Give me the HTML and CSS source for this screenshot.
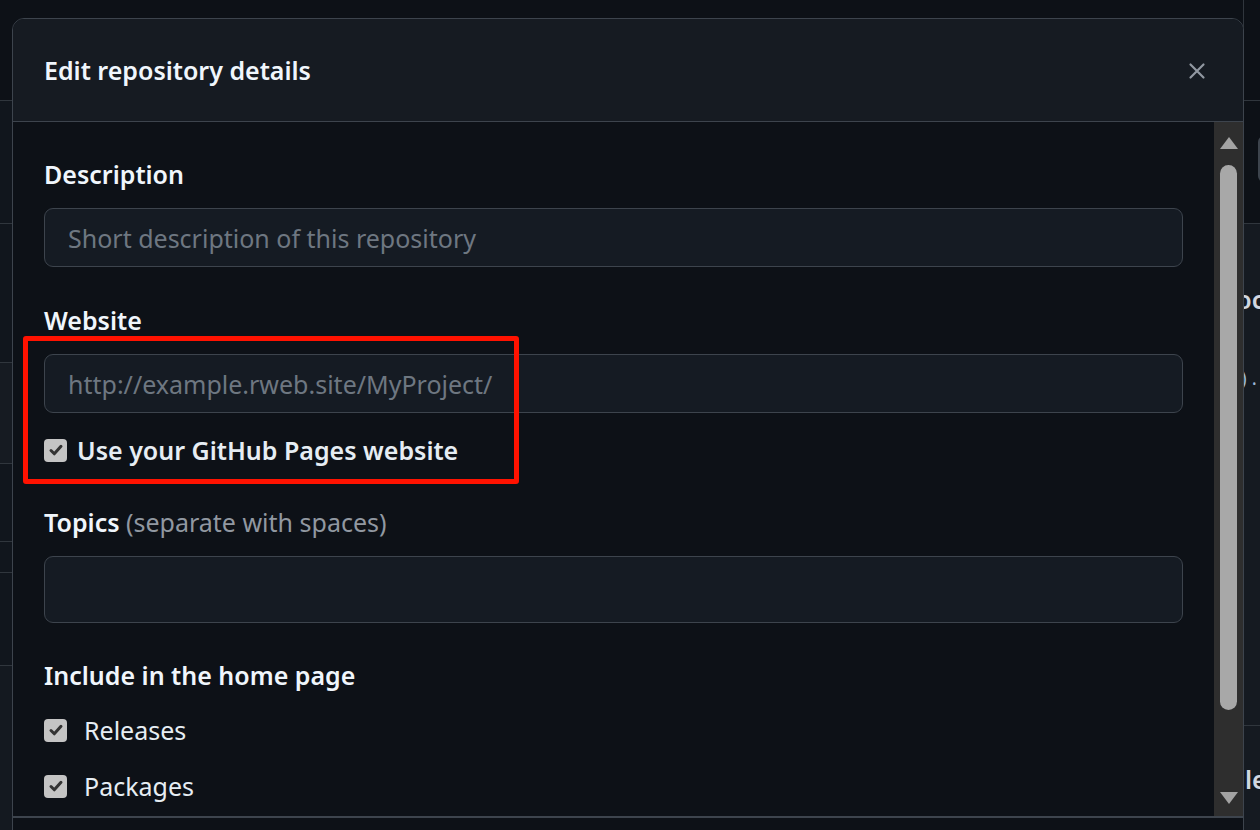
FILE: index.html
```html
<!DOCTYPE html>
<html lang="en">
<head>
<meta charset="utf-8">
<title>Edit repository details</title>
<link rel="stylesheet" href="styles.css">
</head>
<body>
<div class="page">
  <div class="side side-left">
    <div class="seg seg-top"></div>
    <div class="seg seg-a"></div>
    <div class="seg seg-b"></div>
    <div class="seg seg-c"></div>
    <div class="seg seg-d"></div>
    <div class="seg seg-e"></div>
    <div class="seg seg-f"></div>
    <div class="seg seg-g"></div>
  </div>
  <div class="middle"></div>
  <div class="side side-right">
    <div class="seg seg-top"></div>
    <div class="seg r-a"><span class="r-btn"></span></div>
    <div class="seg r-b">
      <div class="r-text r-big">Docs</div>
      <div class="r-text r-small">) .</div>
    </div>
    <div class="seg r-c"><div class="r-text r-big r-last">le</div></div>
  </div>

  <div class="dialog">
    <div class="dialog-header">
      <h1 class="dialog-title">Edit repository details</h1>
      <button class="close-btn" aria-label="Close">
        <svg width="18" height="18" viewBox="0 0 18 18"><path d="M2.5 2.5 L15.5 15.5 M15.5 2.5 L2.5 15.5" stroke="#9198a1" stroke-width="2.2" stroke-linecap="round"/></svg>
      </button>
    </div>
    <div class="dialog-body">
      <div class="form">
        <div class="label first">Description</div>
        <div class="input"><span class="placeholder">Short description of this repository</span></div>

        <div class="label">Website</div>
        <div class="website-group">
          <div class="input"><span class="placeholder">http://example.rweb.site/MyProject/</span></div>
          <div class="check-row strong">
            <span class="checkbox"><svg width="16" height="16" viewBox="0 0 16 16"><path d="M3 8.5 L6.3 11.8 L13 4.3" fill="none" stroke="#333333" stroke-width="3" stroke-linecap="round" stroke-linejoin="round"/></svg></span>
            <span>Use your GitHub Pages website</span>
          </div>
          <div class="highlight"></div>
        </div>

        <div class="label topics">Topics <span class="hint">(separate with spaces)</span></div>
        <div class="input tall"></div>

        <div class="label home">Include in the home page</div>
        <div class="check-row plain">
          <span class="checkbox"><svg width="16" height="16" viewBox="0 0 16 16"><path d="M3 8.5 L6.3 11.8 L13 4.3" fill="none" stroke="#333333" stroke-width="3" stroke-linecap="round" stroke-linejoin="round"/></svg></span>
          <span>Releases</span>
        </div>
        <div class="check-row plain">
          <span class="checkbox"><svg width="16" height="16" viewBox="0 0 16 16"><path d="M3 8.5 L6.3 11.8 L13 4.3" fill="none" stroke="#333333" stroke-width="3" stroke-linecap="round" stroke-linejoin="round"/></svg></span>
          <span>Packages</span>
        </div>
      </div>
      <div class="scrollbar">
        <span class="arrow up"></span>
        <span class="thumb"></span>
        <span class="arrow down"></span>
      </div>
    </div>
    <div class="dialog-footer"></div>
  </div>
</div>
</body>
</html>
```

FILE: styles.css
```css
* { box-sizing: border-box; }
html, body {
  margin: 0;
  padding: 0;
  background: #0d1117;
  width: 1260px;
  height: 830px;
  overflow: hidden;
  font-family: "Noto Sans", "Open Sans", sans-serif;
  color: #e6edf3;
}
.page {
  position: relative;
  display: flex;
  width: 1260px;
  height: 830px;
}
.side { display: flex; flex-direction: column; overflow: hidden; }
.side-left { width: 12px; }
.side-right { width: 17px; border-left: 1px solid #30363d; }
.middle { flex: 1; }
.seg { border-top: 1px solid #30363d; background: #11161d; }
.seg-top { height: 100px; border-top: none; background: #0d1117; }
.seg-a { height: 123px; }
.seg-b { height: 139px; }
.seg-c { height: 101px; background: #161b22; }
.seg-d { height: 78px; }
.seg-e { height: 31px; }
.seg-f { height: 93px; }
.seg-g { flex: 1; background: #141920; }

.r-a { height: 123px; background: #0d1117; padding-top: 35px; }
.r-btn { display: block; margin-left: 14px; width: 10px; height: 46px; border-left: 2px solid #3d444d; border-top: 1px solid #3d444d; border-bottom: 1px solid #3d444d; border-radius: 6px 0 0 6px; }
.r-b { height: 502px; background: #151a21; padding-top: 58px; }
.r-c { flex: 1; background: #151a21; padding-top: 36px; }
.r-text { white-space: nowrap; line-height: 34px; }
.r-big { font-size: 25px; font-weight: 600; margin-left: -26px; color: #d1d7e0; }
.r-small { font-size: 19px; color: #9cb8d8; margin-left: -3px; margin-top: 45px; }
.r-last { margin-left: 1px; }

.dialog {
  position: absolute;
  left: 12px;
  top: 18px;
  width: 1232px;
  height: 840px;
  border: 1px solid #3d444d;
  border-radius: 12px;
  background: #0d1117;
  display: flex;
  flex-direction: column;
  overflow: hidden;
}
.dialog-header {
  height: 103px;
  flex: none;
  background: #161b22;
  border-bottom: 1px solid #3d444d;
  display: flex;
  align-items: center;
  justify-content: space-between;
  padding: 0 36px 0 31px;
}
.dialog-title {
  margin: 0;
  font-size: 25px;
  font-weight: 600;
  color: #f0f6fc;
}
.close-btn {
  background: none;
  border: none;
  padding: 0;
  width: 20px;
  height: 20px;
  margin-top: 2px;
  display: flex;
  align-items: center;
  justify-content: center;
}
.dialog-body {
  height: 694px;
  flex: none;
  display: flex;
}
.form {
  flex: 1;
  padding: 0 31px 0 31px;
  overflow: hidden;
}
.label {
  font-size: 25px;
  font-weight: 600;
  line-height: 30px;
  margin: 38px 0 19px;
  color: #f0f6fc;
}
.label.first { margin-top: 37px; }
.label .hint { font-weight: 400; color: #9198a1; }
.input {
  height: 59px;
  border: 1px solid #3d444d;
  border-radius: 9px;
  background: #151b23;
  padding: 0 23px;
  display: flex;
  align-items: center;
  font-size: 25px;
}
.input.tall { height: 67px; }
.placeholder { color: #6e7781; }

.website-group { position: relative; }
.check-row {
  display: flex;
  align-items: center;
  font-size: 25px;
  line-height: 30px;
}
.check-row.strong { font-weight: 600; gap: 10px; margin-top: 22px; }
.check-row.plain { gap: 17px; margin-top: 26px; }
.home + .check-row.plain { margin-top: 0; }
.label.home { margin-top: 37px; margin-bottom: 25px; }
.label.topics { margin-top: 42px; }
.checkbox {
  width: 23px;
  height: 23px;
  border-radius: 4px;
  background: #c4c4c4;
  display: flex;
  align-items: center;
  justify-content: center;
  flex: none;
}
.highlight {
  position: absolute;
  left: -21px;
  top: -18px;
  width: 496px;
  height: 148px;
  border: 5px solid #ff1200;
  border-radius: 3px;
  pointer-events: none;
}

.scrollbar {
  width: 29px;
  flex: none;
  background: #2e2e2e;
  display: flex;
  flex-direction: column;
  align-items: center;
  padding: 15px 0 12px;
}
.arrow {
  width: 0;
  height: 0;
  border-left: 9px solid transparent;
  border-right: 9px solid transparent;
  flex: none;
}
.arrow.up { border-bottom: 12px solid #a3a3a3; }
.arrow.down { border-top: 12px solid #a3a3a3; }
.thumb {
  width: 17px;
  height: 545px;
  border-radius: 9px;
  background: #a8a8a8;
  margin: 16px 0 auto;
}
.dialog-footer {
  flex: 1;
  border-top: 2px solid #3d444d;
  background: #0d1117;
}
```
